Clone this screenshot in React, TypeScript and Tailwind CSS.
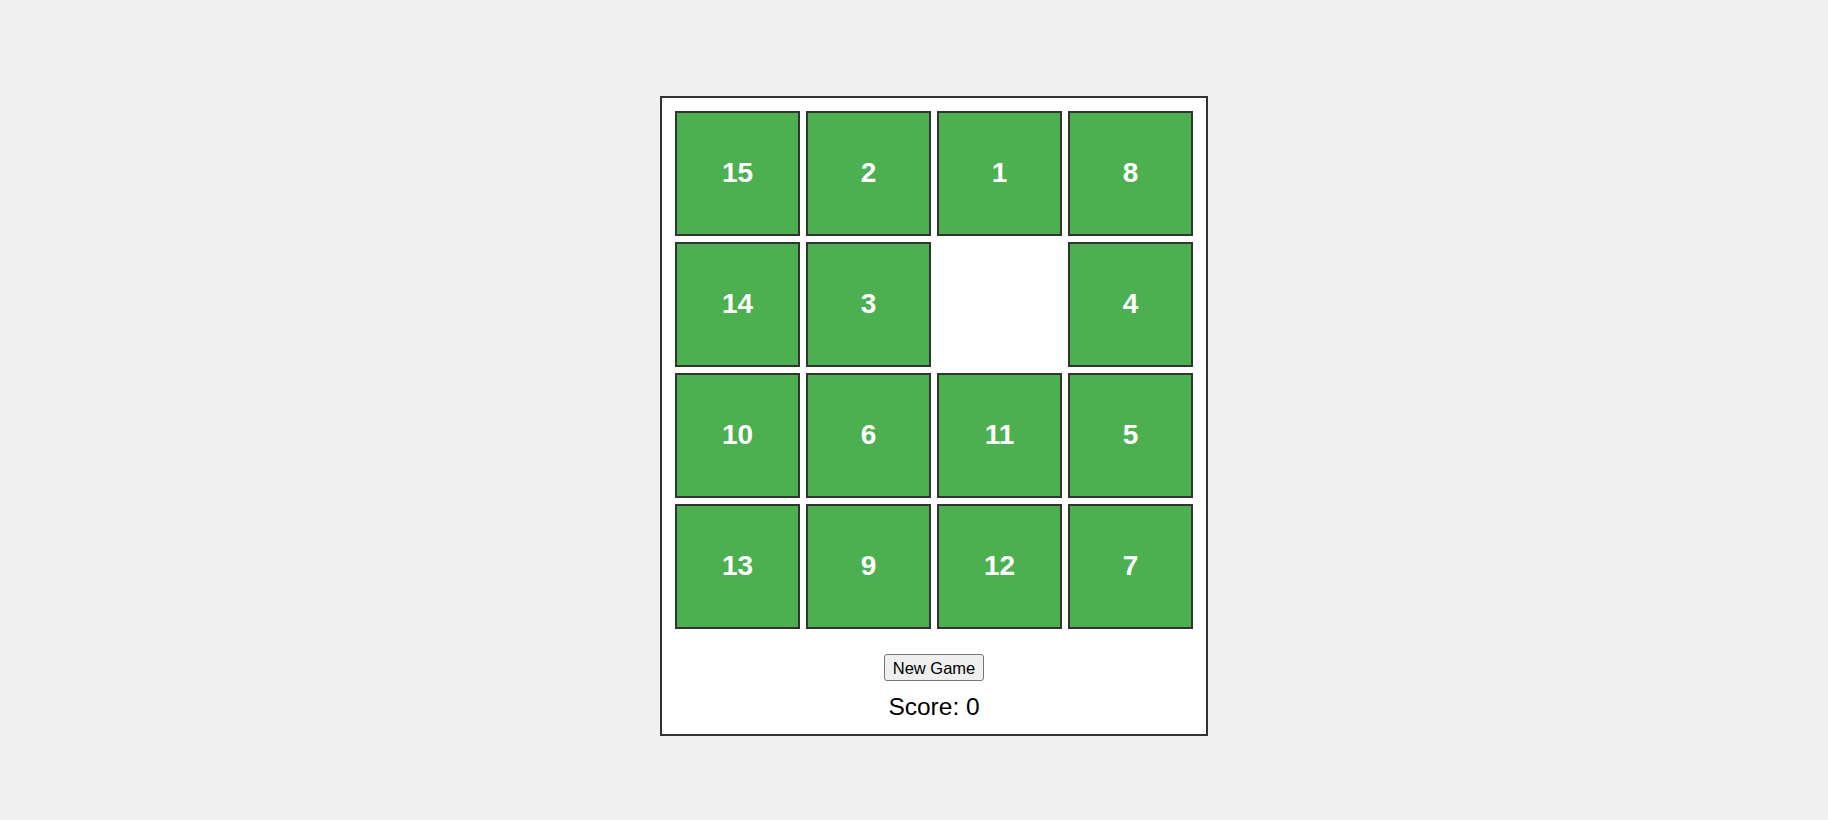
const tiles: (number | null)[] = [15, 2, 1, 8, 14, 3, null, 4, 10, 6, 11, 5, 13, 9, 12, 7];

export default function App() {
  return (
    <main
      className="flex h-[820px] justify-center overflow-hidden bg-[#f0f0f0] pl-[40px] pt-[96px]"
      style={{ fontFamily: '"Liberation Sans", Arial, sans-serif' }}
    >
      <div className="flex h-fit flex-col items-center border-2 border-[#333] bg-white px-[13px] pb-[13px] pt-[13px]">
        {/* Puzzle board */}
        <div className="grid grid-cols-[repeat(4,125px)] grid-rows-[repeat(4,125px)] gap-[6px]">
          {tiles.map((t, i) =>
            t === null ? (
              <div key={i} className="bg-white" />
            ) : (
              <div
                key={i}
                className="flex items-center justify-center border-2 border-[#333] bg-[#4caf50] pb-[2px] text-[28px] font-bold text-white"
              >
                {t}
              </div>
            )
          )}
        </div>

        <button className="mt-[25px] h-[27px] rounded-[3px] border border-[#767676] bg-[#efefef] px-[8px] text-[16.5px] leading-[18px] text-black">
          New Game
        </button>
        <p className="mt-[12px] text-[24.5px] leading-[28px] text-black">Score: 0</p>
      </div>
    </main>
  );
}
